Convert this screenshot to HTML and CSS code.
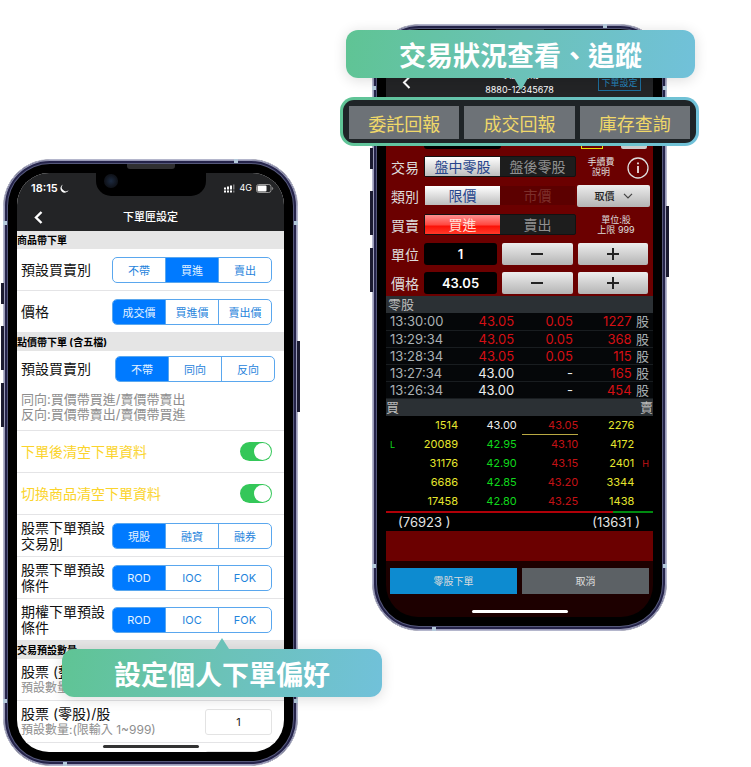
FILE: index.html
```
<!DOCTYPE html>
<html lang="zh-Hant">
<head>
  <meta charset="UTF-8">
  <meta name="viewport" content="width=device-width, initial-scale=1.0">
  <title>下單匣設定</title>
  <link rel="stylesheet" href="styles.css">
</head>
<body>
  <main class="stage">
    <!-- 下單匣設定 -->
    <section class="phone phone-settings">
      <i class="key key-mute"></i><i class="key key-up"></i><i class="key key-down"></i><i class="key key-power"></i>
      <i class="band band-top"></i><i class="band band-left"></i><i class="band band-right"></i><i class="band band-left low"></i><i class="band band-right low"></i><i class="band band-bottom"></i>
      <i class="speaker"></i>
      <div class="screen">
        <div class="notch"><i class="camera"></i></div>
        <header class="status">
          <span class="clock">18:15
            <svg width="9" height="9" viewBox="0 0 9 9"><path d="M3 0.4A4.3 4.3 0 1 0 8.7 6A3.6 3.6 0 0 1 3 0.4Z" fill="#fff"/></svg>
          </span>
          <span class="signal">
            <svg width="11" height="9" viewBox="0 0 11 9" fill="#fff"><path d="M0 3.5h2v2H0zM3 2.5h2v3H3zM6 1.5h2v4H6zM0 6.5h2v2H0zM3 6.5h2v2H3zM6 6.5h2v2H6z"/><path d="M9 .5h1.5v5H9zM9 6.5h1.5v2H9z" opacity=".4"/></svg>
            4G
            <svg width="18" height="9" viewBox="0 0 18 9"><rect x=".5" y=".5" width="14.5" height="8" rx="2.2" fill="none" stroke="#999"/><rect x="1.5" y="1.5" width="9" height="6" rx="1" fill="#fff"/><path d="M16.2 3v3q1-.4 1-1.5t-1-1.5z" fill="#999"/></svg>
          </span>
        </header>
        <nav class="navbar">
          <button type="button" class="back" aria-label="返回"><svg width="9" height="13" viewBox="0 0 9 13"><path d="M7.5 1L2 6.5l5.5 5.5" fill="none" stroke="#fff" stroke-width="2.4"/></svg></button>
          <h1>下單匣設定</h1>
        </nav>

        <h2>商品帶下單</h2>
        <div class="row">
          <span class="label">預設買賣別</span>
          <div class="segment"><button type="button">不帶</button><button type="button" class="on">買進</button><button type="button">賣出</button></div>
        </div>
        <div class="row">
          <span class="label">價格</span>
          <div class="segment"><button type="button" class="on">成交價</button><button type="button">買進價</button><button type="button">賣出價</button></div>
        </div>

        <h2>點價帶下單 (含五檔)</h2>
        <div class="row row-tall">
          <span class="label">預設買賣別</span>
          <div class="segment"><button type="button" class="on">不帶</button><button type="button">同向</button><button type="button">反向</button></div>
          <p class="hint">同向:買價帶買進/賣價帶賣出<br>反向:買價帶賣出/賣價帶買進</p>
        </div>
        <div class="row">
          <label class="label warn" for="clear-order">下單後清空下單資料</label>
          <input type="checkbox" class="switch" id="clear-order" checked>
        </div>
        <div class="row">
          <label class="label warn" for="clear-item">切換商品清空下單資料</label>
          <input type="checkbox" class="switch" id="clear-item" checked>
        </div>
        <div class="row">
          <span class="label">股票下單預設<br>交易別</span>
          <div class="segment"><button type="button" class="on">現股</button><button type="button">融資</button><button type="button">融券</button></div>
        </div>
        <div class="row">
          <span class="label">股票下單預設<br>條件</span>
          <div class="segment"><button type="button" class="on">ROD</button><button type="button">IOC</button><button type="button">FOK</button></div>
        </div>
        <div class="row">
          <span class="label">期權下單預設<br>條件</span>
          <div class="segment"><button type="button" class="on">ROD</button><button type="button">IOC</button><button type="button">FOK</button></div>
        </div>

        <h2>交易預設數量</h2>
        <div class="row">
          <span class="label">股票 (整<small>預設數量</small></span>
        </div>
        <div class="row">
          <label class="label" for="qty-odd">股票 (零股)/股<small>預設數量:(限輸入 1~999)</small></label>
          <input type="text" class="qty" id="qty-odd" value="1">
        </div>
        <div class="row row-cut">
          <input type="text" class="qty" aria-label="預設數量">
        </div>
        <i class="home"></i>
      </div>
      <div class="callout callout-prefs">設定個人下單偏好</div>
    </section>

    <!-- 零股交易 -->
    <section class="phone phone-trade">
      <i class="key key-mute"></i><i class="key key-up"></i><i class="key key-down"></i><i class="key key-power"></i>
      <i class="band band-top"></i><i class="band band-left"></i><i class="band band-right"></i><i class="band band-left low"></i><i class="band band-right low"></i><i class="band band-bottom"></i>
      <i class="speaker"></i>
      <div class="screen">
        <header class="trade-head">
          <button type="button" class="back" aria-label="返回"><svg width="9" height="13" viewBox="0 0 9 13"><path d="M7.5 1L2 6.5l5.5 5.5" fill="none" stroke="#fff" stroke-width="2"/></svg></button>
          <div class="account"><b>零股交易</b>8880-12345678</div>
          <button type="button" class="setup">下單設定</button>
        </header>

        <div class="ticket">
          <div class="line line-cut"><span></span><i class="stub-black"></i><i class="stub-yellow"></i><i class="stub-grey"></i></div>
          <div class="line">
            <span>交易</span>
            <div class="pair"><button type="button" class="light">盤中零股</button><button type="button">盤後零股</button></div>
            <div class="note fee">手續費<br>說明
              <svg width="22" height="22" viewBox="0 0 22 22"><circle cx="11" cy="11" r="10" fill="none" stroke="#ddd" stroke-width="1.3"/><path d="M11 9v7M11 5.4v1.8" stroke="#fff" stroke-width="1.6"/></svg>
            </div>
          </div>
          <div class="line">
            <span>類別</span>
            <div class="pair flat"><button type="button" class="light">限價</button><button type="button" disabled>市價</button></div>
            <button type="button" class="grey pick">取價
              <svg width="10" height="6" viewBox="0 0 10 6"><path d="M1 .8l4 4 4-4" fill="none" stroke="#444" stroke-width="1.2"/></svg>
            </button>
          </div>
          <div class="line">
            <span>買賣</span>
            <div class="pair"><button type="button" class="buy">買進</button><button type="button">賣出</button></div>
            <div class="note">單位:股<br>上限 999</div>
          </div>
          <div class="line stepper">
            <label for="unit">單位</label>
            <input type="text" id="unit" value="1">
            <button type="button" class="grey" aria-label="單位減少"><svg width="12" height="12" viewBox="0 0 12 12"><path d="M0 6h12" stroke="#222" stroke-width="2"/></svg></button>
            <button type="button" class="grey" aria-label="單位增加"><svg width="12" height="12" viewBox="0 0 12 12"><path d="M0 6h12M6 0v12" stroke="#222" stroke-width="2"/></svg></button>
          </div>
          <div class="line stepper">
            <label for="price">價格</label>
            <input type="text" id="price" value="43.05">
            <button type="button" class="grey" aria-label="價格減少"><svg width="12" height="12" viewBox="0 0 12 12"><path d="M0 6h12" stroke="#222" stroke-width="2"/></svg></button>
            <button type="button" class="grey" aria-label="價格增加"><svg width="12" height="12" viewBox="0 0 12 12"><path d="M0 6h12M6 0v12" stroke="#222" stroke-width="2"/></svg></button>
          </div>
        </div>

        <div class="bar"><span>零股</span></div>
        <table class="ticks">
          <tr><td>13:30:00</td><td class="up">43.05</td><td class="up">0.05</td><td class="up">1227</td><td>股</td></tr>
          <tr><td>13:29:34</td><td class="up">43.05</td><td class="up">0.05</td><td class="up">368</td><td>股</td></tr>
          <tr><td>13:28:34</td><td class="up">43.05</td><td class="up">0.05</td><td class="up">115</td><td>股</td></tr>
          <tr><td>13:27:34</td><td class="even">43.00</td><td class="even">-</td><td class="up">165</td><td>股</td></tr>
          <tr><td>13:26:34</td><td class="even">43.00</td><td class="even">-</td><td class="up">454</td><td>股</td></tr>
        </table>
        <div class="bar"><span>買</span><span>賣</span></div>
        <table class="depth">
          <tr><td></td><td>1514</td><td class="even">43.00</td><td class="ask last">43.05</td><td>2276</td><td></td></tr>
          <tr><td class="bid">L</td><td>20089</td><td class="bid">42.95</td><td class="ask">43.10</td><td>4172</td><td></td></tr>
          <tr><td></td><td>31176</td><td class="bid">42.90</td><td class="ask">43.15</td><td>2401</td><td class="ask">H</td></tr>
          <tr><td></td><td>6686</td><td class="bid">42.85</td><td class="ask">43.20</td><td>3344</td><td></td></tr>
          <tr><td></td><td>17458</td><td class="bid">42.80</td><td class="ask">43.25</td><td>1438</td><td></td></tr>
        </table>
        <div class="ratio"><i style="width:85%"></i></div>
        <div class="totals"><span>(76923 )</span><span>(13631 )</span></div>
        <div class="gap"></div>
        <div class="actions">
          <button type="button" class="submit">零股下單</button>
          <button type="button" class="cancel">取消</button>
        </div>
        <i class="home"></i>
      </div>
      <div class="callout callout-status">交易狀況查看、追蹤</div>
      <div class="reports">
        <button type="button">委託回報</button>
        <button type="button">成交回報</button>
        <button type="button">庫存查詢</button>
      </div>
    </section>
  </main>
</body>
</html>
```

FILE: styles.css
```
* { box-sizing: border-box; }
body { margin: 0; background: #fff; font-family: Inter, "Noto Sans CJK TC", sans-serif; overflow-x: hidden; }
button, input { font: inherit; color: inherit; margin: 0; padding: 0; border: none; background: none; }
button { cursor: pointer; }
svg { flex: none; }
.stage { display: grid; grid-template-columns: 1fr 1fr; align-items: start; gap: 74px; padding: 24px 84px 0 3px; }

/* phone shell */
.phone { position: relative; aspect-ratio: 295 / 607; padding: 13px; border: 1px solid #b4b6cc; border-radius: 47px; background: #000; box-shadow: inset 0 0 0 1px #9a9bb8, inset 0 0 0 3px #25244a, inset 0 0 0 4px #55587a; }
.phone-settings { margin-top: 135px; }
.screen { position: relative; height: 100%; overflow: hidden; border-radius: 32px; }
.speaker { position: absolute; top: 4px; left: 50%; width: 48px; height: 5px; margin-left: -24px; border-radius: 0 0 3px 3px; background: #303032; }
.notch { position: absolute; top: 0; left: 50%; width: 110px; height: 23px; margin-left: -55px; border-radius: 0 0 15px 15px; background: #000; }
.camera { position: absolute; top: 1px; left: 8px; width: 14px; height: 14px; border-radius: 50%; background: radial-gradient(#1c2a40, #10141c 60%); }
.home { position: absolute; bottom: 4px; left: 50%; width: 96px; height: 3px; margin-left: -48px; border-radius: 2px; background: #333; }
.key { position: absolute; left: -3px; width: 3px; background: #1b1b30; }
.key-mute { top: 123px; height: 21px; }
.key-up { top: 166px; height: 44px; }
.key-down { top: 223px; height: 44px; }
.key-power { top: 181px; left: auto; right: -3px; height: 71px; }
.band { position: absolute; width: 4px; height: 4px; background: #b4cadb; }
.band-top { top: -1px; right: 59px; }
.band-left { top: 61px; left: -1px; }
.band-right { top: 61px; right: -1px; }
.band.low { top: auto; bottom: 62px; }
.band-bottom { bottom: -1px; left: 59px; }

/* settings screen */
.phone-settings .screen { background: #fff; }
.status { display: flex; justify-content: space-between; padding: 7px 10px 0 14px; height: 30px; background: #232426; color: #fff; font-size: 11px; font-weight: 600; line-height: 16px; }
.clock, .signal { display: flex; align-items: center; gap: 2px; height: 16px; }
.signal { gap: 4px; font-size: 9px; font-weight: 400; }
.navbar { position: relative; height: 28px; background: #232426; color: #fff; text-align: center; }
.navbar h1 { margin: 0; font-size: 11px; line-height: 28px; font-weight: 500; }
.back { display: flex; align-items: center; }
.navbar .back { position: absolute; left: 17px; top: 0; height: 28px; }
h2 { margin: 0; font-size: 10px; line-height: 18px; font-weight: 700; background: #e5e5e5; }
.row { display: flex; align-items: center; justify-content: space-between; height: 42px; padding: 0 12px 0 4px; border-bottom: 1px solid #e4e4e6; }
.label { font-size: 14px; line-height: 16px; color: #111; }
.label small { display: block; font-size: 12px; line-height: 16px; color: #8e8e8e; }
.label.warn { color: #fbd42c; }
.row-tall { flex-wrap: wrap; height: 80px; padding: 5px 9px 8px 4px; align-content: space-between; }
.hint { flex: 0 0 100%; margin: 0; font-size: 13px; line-height: 15px; color: #8e8e8e; }
.segment { display: flex; flex: none; width: 160px; height: 26px; border: 1px solid #5aa7ee; border-radius: 5px; overflow: hidden; }
.segment button { flex: 1; border-left: 1px solid #5aa7ee; font-size: 11px; color: #1f84dc; }
.segment button:first-child { border-left: none; }
.segment .on { background: #007aff; color: #e4f2ff; }
.switch { appearance: none; flex: none; width: 32px; height: 19px; border-radius: 10px; background: #34c759; cursor: pointer; }
.switch::before { content: ""; display: block; width: 17px; height: 17px; margin: 1px 1px 1px 14px; border-radius: 50%; background: #fff; }
.switch:not(:checked) { background: #ccc; }
.switch:not(:checked)::before { margin-left: 1px; }
.qty { flex: none; width: 67px; height: 26px; border: 1px solid #e3e3e3; border-radius: 3px; text-align: center; font-size: 11px; color: #222; }
.row-cut { justify-content: flex-end; }

/* callouts */
.callout { position: absolute; z-index: 2; display: flex; align-items: center; justify-content: center; height: 48px; border-radius: 12px; background: linear-gradient(100deg, #5fc494, #6bc2b8 50%, #71c1da); box-shadow: 0 2px 14px rgba(0,0,0,0.14); color: #fff; font-size: 27px; font-weight: 700; white-space: nowrap; }
.callout::after { content: ""; position: absolute; left: 50%; margin-left: -7px; border: 7px solid transparent; }
.callout-prefs { left: 58px; right: -85px; bottom: 68px; }
.callout-prefs::after { bottom: 100%; border-top: none; border-bottom: 11px solid #6bc2b8; }
.callout-status { top: 5px; left: -27px; right: -29px; }
.callout-status::after { top: 100%; border-bottom: none; border-top: 12px solid #6bc2b8; }
.reports { position: absolute; z-index: 1; top: 72px; left: -33px; right: -33px; display: flex; gap: 5px; height: 49px; padding: 6px 6px 4px; border: 3px solid transparent; border-radius: 14px; background: linear-gradient(#1f2427, #1f2427) padding-box, linear-gradient(100deg, #5fc494, #71c1da) border-box; }
.reports button { flex: 1; background: #6d7277; color: #f0d869; font-size: 18px; }

/* odd-lot trading screen */
.phone-trade .screen { background: #1d0000; color: #ddd; }
.trade-head { display: grid; grid-template-columns: 43px 1fr 43px; align-items: center; height: 66px; padding: 22px 12px 0; background: #232426; color: #fff; }
.trade-head .back { padding-left: 4px; }
.account { font-size: 9px; line-height: 16px; text-align: center; }
.account b { display: block; font-size: 10px; font-weight: 500; }
.setup { height: 18px; border: 1px solid #1c6d9c; color: #2585ba; font-size: 9px; }
.ticket { display: grid; gap: 6px; padding: 0 3px 2px 5px; background: #6b0000; }
.line { display: grid; grid-template-columns: 33px 152px 1fr; align-items: center; height: 23px; font-size: 14px; }
.line-cut { grid-template-columns: 33px 77px 80px 22px 18px 26px; height: 45px; align-items: end; justify-content: start; }
.stub-black { height: 30px; background: #000; border-radius: 3px; }
.stub-yellow { grid-column: 4; height: 30px; border: 1px solid #e8dc00; }
.stub-grey { grid-column: 6; height: 30px; background: #ccc; border-radius: 2px; }
.pair { display: flex; height: 21px; border: 1px solid #121212; border-radius: 2px; background: #1d1d1d; }
.pair button { flex: 1; line-height: 19px; font-size: 14px; color: #909090; }
.pair.flat { background: none; border-color: transparent; }
.pair.flat button:disabled { background: #5c0000; color: #7d2f2b; }
.pair .light { background: linear-gradient(#fff, #bdbdbd); color: #27468c; }
.pair.flat .light { color: #27468c; }
.pair .buy { background: linear-gradient(#ff8f8f, #ff4a42 50%, #fb1208 60%, #ff3a2a); color: #ffe0d8; }
.note { position: relative; padding-left: 6px; font-size: 9px; line-height: 10px; text-align: center; }
.fee { padding: 0 24px 0 0; }
.fee svg { position: absolute; right: 1px; top: 0; }
.grey { display: flex; align-items: center; justify-content: center; height: 22px; border-radius: 2px; background: linear-gradient(#ededed, #b4b4b4); color: #222; }
.pick { gap: 8px; margin-left: 1px; font-size: 10px; font-weight: 500; }
.stepper { grid-template-columns: 33px 73px 1fr 1fr; padding-right: 2px; }
.stepper input { width: 100%; height: 22px; border-radius: 3px; background: #000; color: #fff; text-align: center; font-size: 13px; font-weight: 600; }
.stepper .grey { margin-left: 5px; }
.bar { display: flex; justify-content: space-between; height: 17px; background: #2b3034; color: #bbb; font-size: 13px; line-height: 17px; }
.bar span:only-child { padding-left: 2px; }
table { width: 100%; border-collapse: collapse; table-layout: fixed; background: #050709; }
td { padding: 0; text-align: right; }
.ticks tr { height: 17px; border-bottom: 1px solid #191d20; }
.ticks td { font-size: 13px; line-height: 16px; color: #a9b0b3; }
.ticks td:nth-child(1) { width: 22%; text-align: left; padding-left: 4px; }
.ticks td:nth-child(2) { width: 26%; }
.ticks td:nth-child(3) { width: 22%; }
.ticks td:nth-child(4) { width: 22%; }
.ticks td:nth-child(5) { padding-right: 4px; }
.ticks td.up { color: #d50f14; }
.ticks td.even, .depth td.even { color: #eee; }
.depth { background: #000; }
.depth td { height: 19px; font-size: 11px; line-height: 19px; color: #e6e62e; }
.depth td:nth-child(1) { width: 5%; padding-left: 4px; text-align: left; font-size: 9px; }
.depth td:nth-child(2) { width: 22%; }
.depth td:nth-child(3) { width: 22%; }
.depth td:nth-child(4) { width: 23%; }
.depth td:nth-child(5) { width: 21%; }
.depth td:nth-child(6) { padding-right: 4px; font-size: 9px; }
.depth td.bid { color: #10d81c; }
.depth td.ask { color: #c41216; }
.depth .last { background: linear-gradient(#b9a943, #b9a943) right bottom / 56px 1px no-repeat; }
.ratio { height: 2px; background: #008a10; }
.ratio i { display: block; height: 2px; background: #b00008; }
.totals { display: flex; justify-content: space-between; height: 18px; padding: 0 13px 0 12px; background: #000; color: #e5e5e5; font-size: 13px; line-height: 18px; }
.gap { height: 30px; background: #6b0000; }
.actions { display: flex; gap: 5px; padding: 7px 4px; }
.actions button { flex: 1; height: 26px; color: #ddd; font-size: 10px; }
.actions .submit { background: #0d8bd0; }
.actions .cancel { background: #5c6165; }
.phone-trade .home { background: #fff; }
```
